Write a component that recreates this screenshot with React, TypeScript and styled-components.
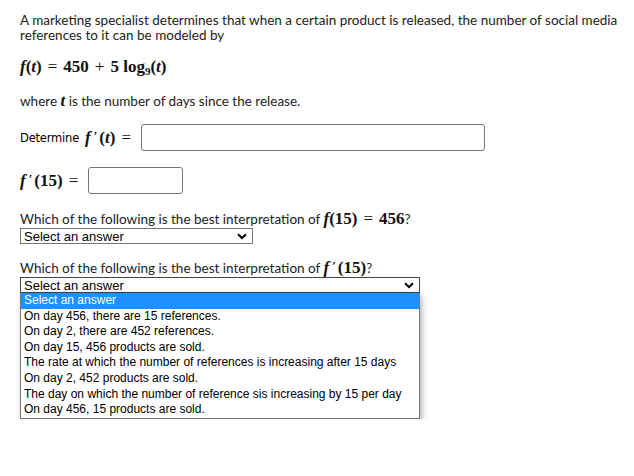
import styled, { createGlobalStyle } from 'styled-components'

const options = [
    'Select an answer',
    'On day 456, there are 15 references.',
    'On day 2, there are 452 references.',
    'On day 15, 456 products are sold.',
    'The rate at which the number of references is increasing after 15 days',
    'On day 2, 452 products are sold.',
    'The day on which the number of reference sis increasing by 15 per day',
    'On day 456, 15 products are sold.',
]

export default function App() {
    return (
        <>
            <GlobalStyle />
            <StyledPage>
                <StyledPara>
                    A marketing specialist determines that when a certain product is released, the number of social media references to it can be modeled by
                </StyledPara>
                <StyledFormula>
                    <I>f</I>(<I>t</I>)<Op>=</Op>450<Op>+</Op>5 log<Sub>9</Sub>(<I>t</I>)
                </StyledFormula>
                <StyledPara>
                    where <MathInline><I>t</I></MathInline> is the number of days since the release.
                </StyledPara>

                <StyledRow $top={15}>
                    <StyledLabel>Determine</StyledLabel>
                    <MathInline><I>f</I><Prime>′</Prime>(<I>t</I>)<Op>=</Op></MathInline>
                    <StyledInput $width={344} />
                </StyledRow>
                <StyledRow $top={16}>
                    <MathInline><I>f</I><Prime>′</Prime>(15)<Op>=</Op></MathInline>
                    <StyledInput $width={95} />
                </StyledRow>

                <StyledQuestion $top={16}>
                    Which of the following is the best interpretation of <MathInline><I>f</I>(15)<Op>=</Op>456</MathInline>?
                </StyledQuestion>
                <StyledSelect $width={233}>
                    <span>Select an answer</span>
                    <Chevron />
                </StyledSelect>

                <StyledQuestion $top={13}>
                    Which of the following is the best interpretation of <MathInline><I>f</I><Prime>′</Prime>(15)</MathInline>?
                </StyledQuestion>
                <StyledSelect $width={400} $open>
                    <span>Select an answer</span>
                    <Chevron />
                </StyledSelect>
                <StyledMenu>
                    {options.map((o, i) => (
                        <StyledOption key={i} $active={i === 0}>{o}</StyledOption>
                    ))}
                </StyledMenu>
            </StyledPage>
        </>
    )
}

function Chevron() {
    return (
        <svg width="10" height="7" viewBox="0 0 10 7">
            <path d="M1 1.2 L5 5 L9 1.2" fill="none" stroke="#000" strokeWidth="2" />
        </svg>
    )
}

const GlobalStyle = createGlobalStyle`
    body {
        margin: 0;
        background: #fff;
    }
`

const StyledPage = styled.div`
    padding: 13px 20px 0 20px;
    font-family: 'Lato', 'Liberation Sans', sans-serif;
    font-size: 13.5px;
    color: #222;
    width: 610px;
`

const StyledPara = styled.p`
    margin: 0;
    line-height: 15px;
`

const StyledFormula = styled.div`
    margin: 14px 0 12px 0;
    font-family: 'Liberation Serif', serif;
    font-size: 17px;
    font-weight: 600;
    line-height: 20px;
    color: #111;
`

const I = styled.i`
    font-style: italic;
`

const Op = styled.span`
    margin: 0 6px;
    font-weight: 400;
`

const Prime = styled.span`
    margin: 0 2px 0 3px;
    font-size: 13px;
    vertical-align: 3px;
`

const Sub = styled.sub`
    font-size: 11px;
    vertical-align: -3px;
`

const MathInline = styled.span`
    font-family: 'Liberation Serif', serif;
    font-size: 17px;
    font-weight: 600;
    color: #111;
`

const StyledRow = styled.div<{ $top: number }>`
    display: flex;
    align-items: center;
    gap: 4px;
    margin-top: ${p => p.$top}px;
`

const StyledLabel = styled.span`
    margin-right: 2px;
    font-family: 'DejaVu Sans', sans-serif;
    font-size: 11.5px;
    letter-spacing: -0.2px;
    color: #000;
`

const StyledInput = styled.div<{ $width: number }>`
    width: ${p => p.$width}px;
    height: 27px;
    box-sizing: border-box;
    border: 1px solid #777;
    border-radius: 3px;
    background: #fff;
`

const StyledQuestion = styled.div<{ $top: number }>`
    margin-top: ${p => p.$top}px;
    line-height: 17px;
`

const StyledSelect = styled.div<{ $width: number; $open?: boolean }>`
    width: ${p => p.$width}px;
    height: 16px;
    box-sizing: border-box;
    display: flex;
    align-items: center;
    justify-content: space-between;
    padding: 0 5px 0 3px;
    border: 1px solid ${p => (p.$open ? '#444' : '#767676')};
    font-family: 'Liberation Sans', Arial, sans-serif;
    font-size: 13px;
    color: #000;
    background: #fff;
`

const StyledMenu = styled.div`
    width: 400px;
    box-sizing: border-box;
    border: 1px solid #767676;
    border-top: none;
    background: #fff;
    box-shadow: 2px 3px 6px rgba(0, 0, 0, 0.3);
    font-family: 'Liberation Sans', Arial, sans-serif;
    font-size: 12px;
`

const StyledOption = styled.div<{ $active: boolean }>`
    height: 15.6px;
    line-height: 15.6px;
    padding-left: 3px;
    white-space: nowrap;
    color: ${p => (p.$active ? '#fff' : '#000')};
    background: ${p => (p.$active ? '#1e90ff' : 'transparent')};
`
